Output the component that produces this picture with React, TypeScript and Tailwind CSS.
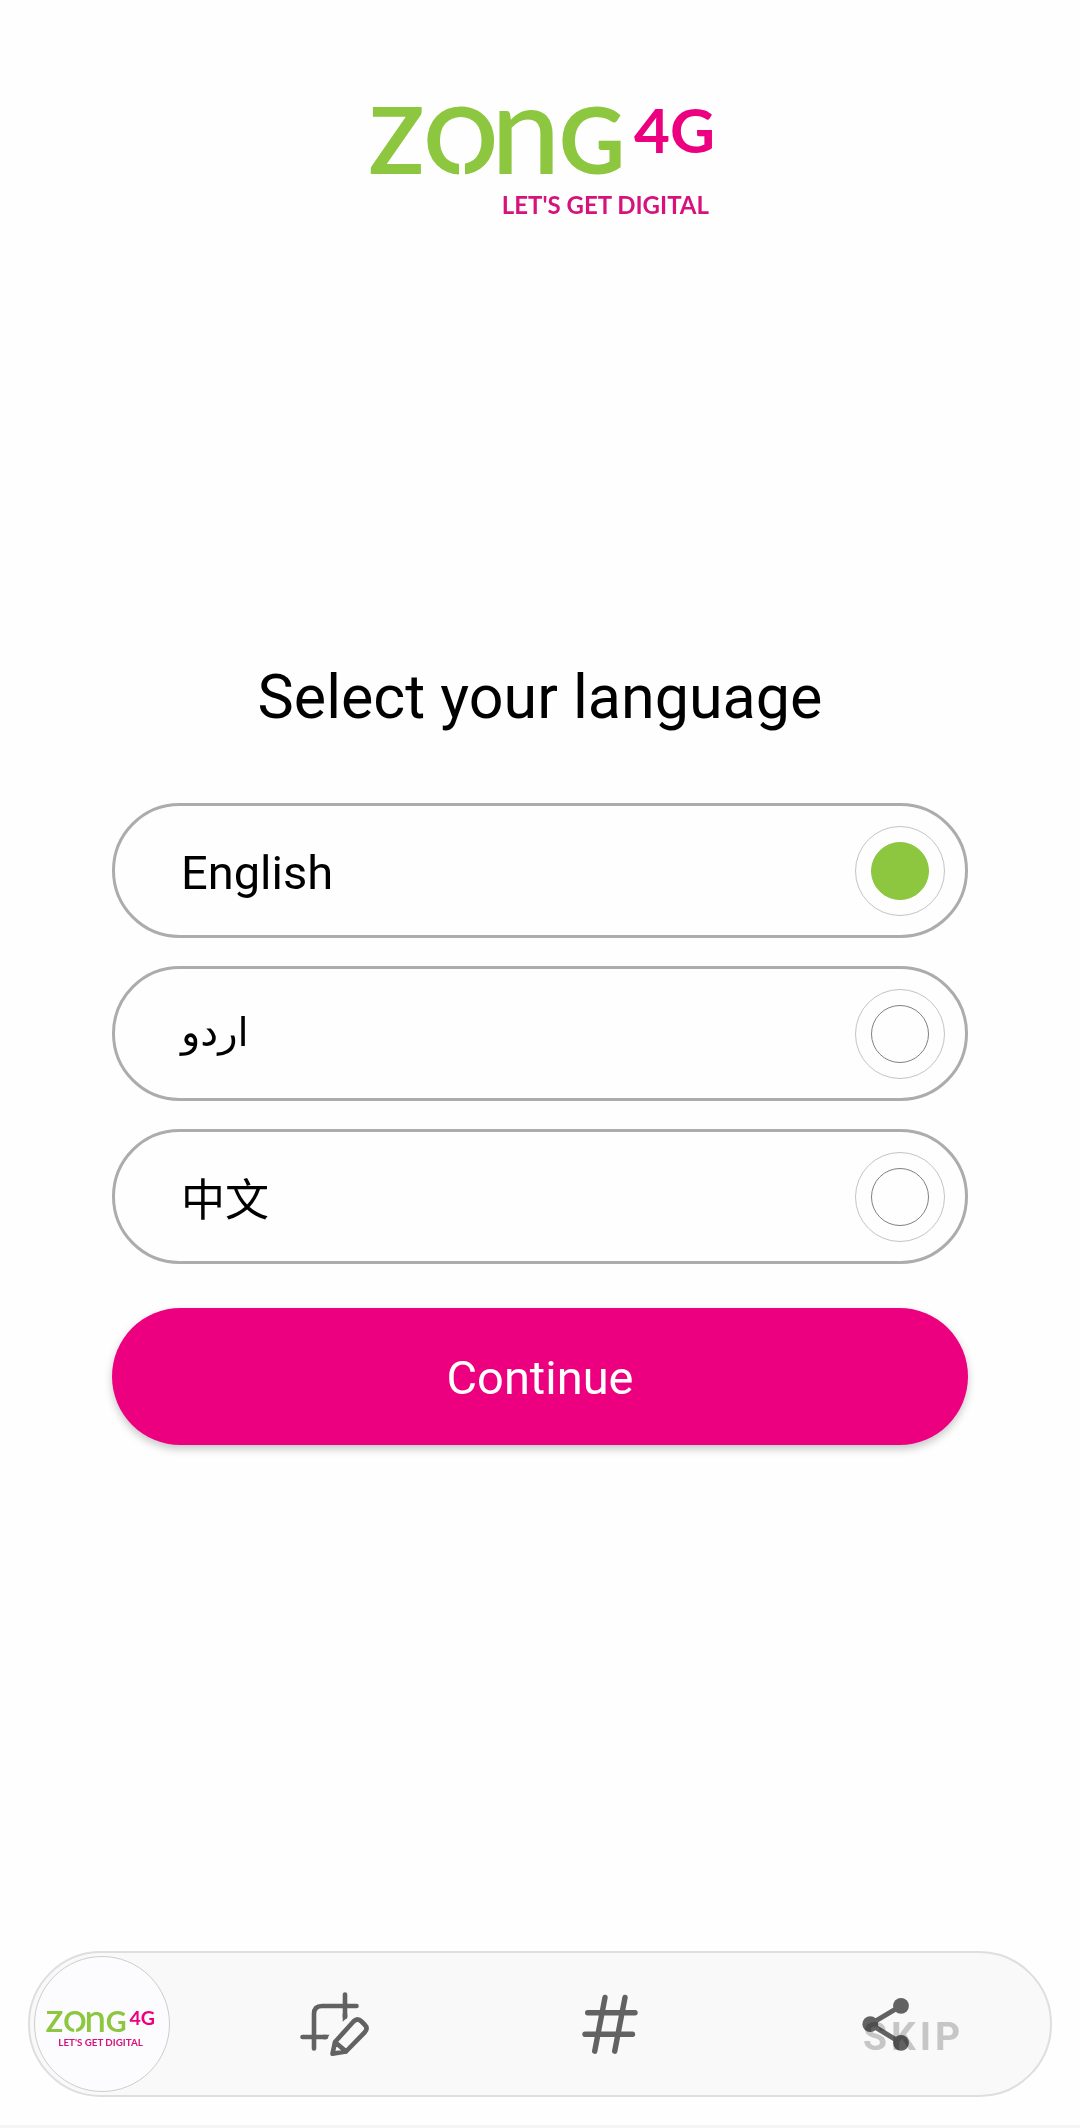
import { useState } from "react";

type LogoProps = { className: string; compact?: boolean };

function ZongLogo({ className, compact = false }: LogoProps) {
  return (
    <svg
      className={className}
      viewBox={compact ? "6 -11 345 110" : "0 0 340 110"}
      role="img"
      aria-label="Zong 4G, Let's get digital"
      fontFamily="Lato, 'Liberation Sans', sans-serif"
      fontWeight="700"
    >
      <text y="68" fontSize="91" fill="#8dc63f">
        <tspan x="-1">Z</tspan>
        <tspan x="54">O</tspan>
        <tspan x="121" fontSize="124" fontWeight="500">n</tspan>
        <tspan x="189">G</tspan>
      </text>
      <rect x="89" y="53" width="6" height="18" fill="#fefefe" />
      <text x="264" y="47" fontSize="62" fontWeight="700" fill="#ec0080">
        4G
      </text>
      <text
        x={compact ? 306 : 339}
        y={compact ? 112 : 108}
        fontSize={compact ? 31 : 24}
        textAnchor="end"
        fill="#d6127c"
      >
        LET'S GET DIGITAL
      </text>
    </svg>
  );
}

function CropEditIcon() {
  return (
    <svg className="size-[110px]" viewBox="2 0 110 110" fill="none" stroke="#646464" strokeWidth="4.6" strokeLinecap="round" strokeLinejoin="round" aria-hidden="true">
      <path d="M76.500 37H42q-8 0-8 8v34.500M22.500 68H46M65 25.500V48" />
      <path d="M62.700 45h4.600v3.500l-4.600 4.300zM43 65.700h6.500l-3 4.600H43z" fill="#646464" stroke="none" />
      <path d="M55 73l18.500-20.500q4-4 8 0l3 3q4 4 0 8L66 82.500l-13.500 2.300zM55 73l11 9.500" />
    </svg>
  );
}

function HashIcon() {
  return (
    <svg className="size-[110px]" viewBox="1 0 110 110" fill="none" stroke="#646464" strokeWidth="5.4" strokeLinecap="round" aria-hidden="true">
      <path d="M55 28.500l-10.300 53.700M75 28.500l-10.300 53.700M37.700 43.800H85M35 65.200h47.500" />
    </svg>
  );
}

function ShareIcon() {
  return (
    <svg className="size-[110px]" viewBox="0 0 110 110" fill="#646464" aria-hidden="true">
      <path d="M81 36.800L50.300 55.200L81 73.800" fill="none" stroke="#646464" strokeWidth="5" />
      <circle cx="81" cy="36.800" r="7.900" />
      <circle cx="50.300" cy="55.200" r="7.900" />
      <circle cx="81" cy="73.800" r="7.900" />
    </svg>
  );
}

const languages = [
  { id: "en", label: "English", text: "text-[47px] pt-1" },
  { id: "ur", label: "اردو", text: "font-['DejaVu_Sans'] text-[40px] pb-1" },
  { id: "zh", label: "中文", text: "text-[44px] pt-2" },
];

const tools = [
  { name: "Crop and edit", Icon: CropEditIcon },
  { name: "Add tag", Icon: HashIcon },
  { name: "Share", Icon: ShareIcon },
];

export default function App() {
  const [language, setLanguage] = useState("en");

  return (
    <div className="flex min-h-screen flex-col border-b-[3px] border-[#f5f5f8] bg-[#fefefe] font-[Roboto,'Noto_Sans_CJK_SC',sans-serif] text-black">
      <header className="flex justify-center pt-[106px]">
        <ZongLogo className="w-[340px] overflow-visible" />
      </header>

      <main className="mt-[445px] px-28">
        <h1 id="language-heading" className="text-center text-[61px] leading-[72px]">
          Select your language
        </h1>
        <div role="radiogroup" aria-labelledby="language-heading" className="mt-[70px] flex flex-col gap-7">
          {languages.map(({ id, label, text }) => (
            <label
              key={id}
              className="flex h-[135px] items-center justify-between rounded-full border-[3px] border-[#acacac] pl-[66px] pr-5"
            >
              <span lang={id} className={`${text} leading-[56px]`}>
                {label}
              </span>
              <input
                type="radio"
                name="language"
                value={id}
                checked={language === id}
                onChange={() => setLanguage(id)}
                className="grid size-[90px] appearance-none place-items-center rounded-full border border-[#c4c4c4] before:size-[58px] before:rounded-full before:border before:border-[#808080] checked:before:border-[#8dc63f] checked:before:bg-[#8dc63f]"
              />
            </label>
          ))}
        </div>
        <button
          type="button"
          className="mt-11 h-[137px] w-full rounded-full bg-[#ec0080] pt-1 text-[47px] text-white shadow-[0_4px_8px_rgba(0,0,0,0.22)]"
        >
          Continue
        </button>
      </main>

      <nav className="relative mx-7 mt-auto mb-7 flex h-[146px] items-center rounded-full border-2 border-[#dedede] bg-[#f9f9f9] pl-1 pr-10">
        <button type="button" className="absolute right-[86px] top-[63px] text-[39px] leading-[42px] font-bold tracking-widest text-[#c6c6c6]">
          SKIP
        </button>
        <button
          type="button"
          aria-label="Preview"
          className="mr-8 flex size-[136px] shrink-0 items-center justify-center rounded-full border border-[#cdcdcd] bg-[#fcfcfe]"
        >
          <ZongLogo className="w-[109px] overflow-visible" compact />
        </button>
        {tools.map(({ name, Icon }) => (
          <button key={name} type="button" aria-label={name} className="flex flex-1 justify-center mix-blend-multiply">
            <Icon />
          </button>
        ))}
      </nav>
    </div>
  );
}
